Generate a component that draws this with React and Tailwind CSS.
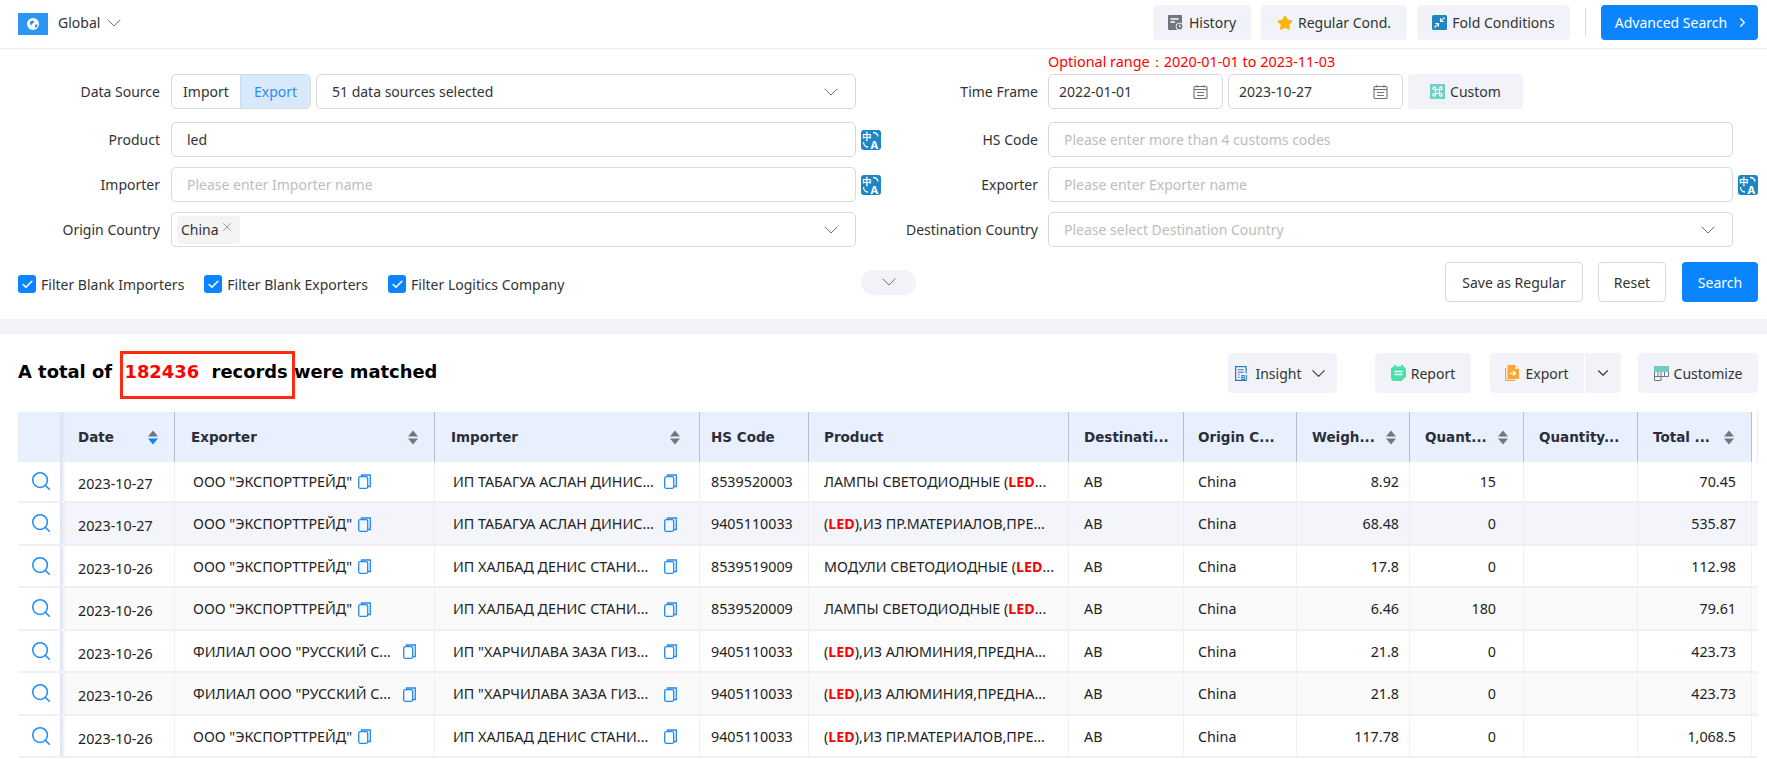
import { ChevronDown, ChevronRight, Search, X, Check, Star } from "lucide-react"

const font = "font-['Noto_Sans','Liberation_Sans',sans-serif]"

const GlobeIcon = () => (
  <svg width="14" height="14" viewBox="0 0 14 14">
    <circle cx="7" cy="7" r="6" fill="#fff" />
    <path d="M4 4.500l3-1 1.500 1.500-2 1.500-1 2-1.500-1.500zM9 8l2.500-1-.5 3-2 1z" fill="#2b96f6" />
  </svg>
)

const HistoryIcon = () => (
  <svg width="16" height="16" viewBox="0 0 16 16">
    <rect width="14" height="15" rx="1" fill="#71757f" />
    <path d="M2.500 4h8M2.500 7h4.500" stroke="#fff" strokeWidth="1.400" />
    <circle cx="11.500" cy="11.500" r="3.500" fill="#71757f" stroke="#f2f3f8" />
    <path d="M11.500 9.800v1.900h1.500" stroke="#fff" fill="none" strokeWidth="0.900" />
  </svg>
)

const FoldIcon = () => (
  <svg width="15" height="15" viewBox="0 0 15 15">
    <rect width="15" height="15" rx="1.500" fill="#1f86c4" />
    <path d="M12.500 2.500L8.800 6.200M8.500 3.300v3.200h3.200" stroke="#fff" strokeWidth="1.100" fill="none" />
    <path d="M2.500 12.500l3.700-3.700M3.300 8.500h3.200v3.200" stroke="#fff" strokeWidth="1.100" fill="none" />
  </svg>
)

const CalendarIcon = () => (
  <svg width="15" height="14" viewBox="0 0 15 14" fill="none" stroke="#70737a" strokeWidth="1.100">
    <rect x="1" y="1.500" width="13" height="12" rx="1" />
    <path d="M1 4.500h13M4 0v2.500M11 0v2.500M4 7.500h7M4 10.500h7" />
  </svg>
)

const CustomIcon = () => (
  <svg width="15" height="15" viewBox="0 0 15 15">
    <rect width="15" height="15" fill="#72cfc4" />
    <path d="M5.500 5.500h4v4h-4zM5.500 5.500H4.300a1.300 1.300 0 1 1 1.200-1.300zM9.500 5.500V4.200a1.300 1.300 0 1 1 1.300 1.300zM5.500 9.500v1.300a1.300 1.300 0 1 1-1.300-1.300zM9.500 9.500h1.300a1.300 1.300 0 1 1-1.300 1.300z" stroke="#fff" strokeWidth="1.200" fill="none" />
  </svg>
)

const TranslateIcon = () => (
  <svg width="20" height="20" viewBox="0 0 20 20" className="shrink-0">
    <rect width="20" height="20" rx="3" fill="#1f86c4" />
    <text x="1" y="10" fontSize="9.500" fontWeight="700" fill="#fff" fontFamily="'Noto Sans CJK SC',sans-serif">中</text>
    <text x="9.500" y="18.500" fontSize="11" fontWeight="700" fill="#fff" fontFamily="'Noto Sans',sans-serif">A</text>
    <path d="M12 2.500c2.500 0 4.500 1 5 4M2.500 12c0 3 2 5 4.500 5" stroke="#fff" strokeWidth="1.300" fill="none" />
  </svg>
)

const InsightIcon = () => (
  <svg width="15" height="15" viewBox="0 0 15 15" fill="none">
    <rect x="0.600" y="0.600" width="10.500" height="13.800" stroke="#2577b8" strokeWidth="1.200" />
    <path d="M2.800 3.800h6M2.800 6.300h6M2.800 8.800h1.700M2.800 11.300h1.700" stroke="#2577b8" strokeWidth="1.100" />
    <rect x="5.500" y="7.500" width="9.500" height="6.500" fill="#f2f3f8" />
    <text x="5.800" y="13.700" fontSize="6.500" fontWeight="700" fill="#2577b8" fontFamily="'Liberation Sans',sans-serif">BI</text>
  </svg>
)

const ReportIcon = () => (
  <svg width="15" height="16" viewBox="0 0 15 16">
    <path d="M3.500 1.500h8A3.500 3.500 0 0 1 15 5v6.500L10.500 16h-7A3.500 3.500 0 0 1 0 12.500V5a3.500 3.500 0 0 1 3.500-3.500z" fill="#47e2a8" />
    <path d="M4 0v3M11 0v3" stroke="#47e2a8" strokeWidth="2" />
    <path d="M3.500 6.500h8M3.500 9.500h8" stroke="#fff" strokeWidth="1.400" />
  </svg>
)

const ExportIcon = () => (
  <svg width="14" height="16" viewBox="0 0 14 16">
    <path d="M0 3h1.200v11.800H10V16H0z" fill="#f7a738" />
    <path d="M2.500 0h7.500l4 4v10H2.500z" fill="#f7a738" />
    <path d="M10 0l4 4h-4z" fill="#fde2b8" />
    <path d="M5 8.300h5.500M8 6l2.500 2.300L8 10.600" stroke="#fff" strokeWidth="1.200" fill="none" />
  </svg>
)

const CustomizeIcon = () => (
  <svg width="15" height="15" viewBox="0 0 15 15" fill="none">
    <rect width="15" height="6" fill="#6fcdc4" />
    <path d="M.500 6v8.500h6.500V6M.500 10.500h14V6M4 6v4.500M10.500 6v4.500" stroke="#71757f" />
  </svg>
)

const CopyIcon = () => (
  <svg width="13" height="15" viewBox="0 0 13 15" fill="none" stroke="#1f8bf5" strokeWidth="1.300" className="shrink-0">
    <path d="M3.500 2.500V1h8.800v11.500H10" />
    <rect x="0.700" y="2.700" width="9" height="11.600" rx="1.500" />
  </svg>
)

const SortIcon = ({ active }) => (
  <svg width="10" height="15" viewBox="0 0 10 15" className="shrink-0">
    <path d="M5 .500l5 6h-10z" fill="#73767d" />
    <path d="M5 14.500L10 8.500h-10z" fill={active ? "#0a84ff" : "#73767d"} />
  </svg>
)

const GrayButton = ({ children, className }) => (
  <div className={`flex items-center justify-center gap-[5px] rounded-[4px] bg-[#f2f3f8] text-[14px] text-[#333] ${className}`}>
    {children}
  </div>
)

const Field = ({ children, placeholder, chevron }) => (
  <div className="flex h-[35px] w-[685px] shrink-0 items-center rounded-[5px] border border-[#d9d9d9] pl-[15px] pr-[12px] text-[14px] text-[#333]">
    <div className="flex-1">{children || <span className="text-[#bdbdbd]">{placeholder}</span>}</div>
    {chevron && <ChevronDown size={24} strokeWidth={1} color="#70737a" />}
  </div>
)

const Label = ({ children, className }) => (
  <div className={`shrink-0 text-right text-[14px] text-[#333] ${className}`}>{children}</div>
)

const FormRow = ({ left, leftExtra, right, rightLabel, leftLabel, rightExtra, className }) => (
  <div className={`flex h-[35px] items-center ${className || ""}`}>
    <Label className="w-[160px]">{leftLabel}</Label>
    <div className="ml-[11px] flex w-[685px] shrink-0">{left}</div>
    <div className="ml-[5px] w-[20px] shrink-0">{leftExtra}</div>
    <Label className="w-[157px]">{rightLabel}</Label>
    <div className="ml-[10px] flex w-[685px] shrink-0">{right}</div>
    <div className="ml-[5px] w-[20px] shrink-0">{rightExtra}</div>
  </div>
)

const DateField = ({ value }) => (
  <div className="flex h-[35px] w-[175px] items-center justify-between rounded-[5px] border border-[#d9d9d9] pl-[10px] pr-[14px] text-[14px] text-[#333]">
    {value}
    <CalendarIcon />
  </div>
)

const FilterCheck = ({ label, className }) => (
  <div className={`mt-[4px] flex items-center gap-[5px] text-[14px] text-[#333] ${className || ""}`}>
    <span className="flex size-[18px] items-center justify-center rounded-[3px] bg-[#0a84ff]">
      <Check size={13} strokeWidth={3} color="#fff" />
    </span>
    {label}
  </div>
)

const columns = [
  { name: "Date", w: "w-[115px]", head: "pl-[18px] pr-[16px]", sort: true, active: true },
  { name: "Exporter", w: "w-[260px]", head: "pl-[16px] pr-[16px]", sort: true },
  { name: "Importer", w: "w-[265px]", head: "pl-[16px] pr-[19px]", sort: true },
  { name: "HS Code", w: "w-[109px]", head: "pl-[11px]" },
  { name: "Product", w: "w-[260px]", head: "pl-[15px]" },
  { name: "Destinati...", w: "w-[115px]", head: "pl-[15px]" },
  { name: "Origin C...", w: "w-[113px]", head: "pl-[14px]" },
  { name: "Weigh...", w: "w-[113px]", head: "pl-[15px] pr-[13px]", sort: true },
  { name: "Quant...", w: "w-[114px]", head: "pl-[15px] pr-[15px]", sort: true },
  { name: "Quantity...", w: "w-[114px]", head: "pl-[15px]" },
  { name: "Total ...", w: "w-[114px]", head: "pl-[15px] pr-[17px]", sort: true },
]

const EXP = 'ООО "ЭКСПОРТТРЕЙД"'
const FIL = 'ФИЛИАЛ ООО "РУССКИЙ С...'
const TAB = "ИП ТАБАГУА АСЛАН ДИНИС..."
const HAL = "ИП ХАЛБАД ДЕНИС СТАНИ..."
const HAR = 'ИП "ХАРЧИЛАВА ЗАЗА ГИЗ...'

const LED = () => <b className="font-bold text-[#f00]">LED</b>

const rows = [
  { bg: "bg-white", date: "2023-10-27", exp: EXP, imp: TAB, hs: "8539520003", product: <>ЛАМПЫ СВЕТОДИОДНЫЕ (<LED />...</>, weight: "8.92", qty: "15", total: "70.45" },
  { bg: "bg-[#f4f5fa]", date: "2023-10-27", exp: EXP, imp: TAB, hs: "9405110033", product: <>(<LED />),ИЗ ПР.МАТЕРИАЛОВ,ПРЕ...</>, weight: "68.48", qty: "0", total: "535.87" },
  { bg: "bg-white", date: "2023-10-26", exp: EXP, imp: HAL, hs: "8539519009", product: <>МОДУЛИ СВЕТОДИОДНЫЕ (<LED />...</>, weight: "17.8", qty: "0", total: "112.98" },
  { bg: "bg-[#fafafa]", date: "2023-10-26", exp: EXP, imp: HAL, hs: "8539520009", product: <>ЛАМПЫ СВЕТОДИОДНЫЕ (<LED />...</>, weight: "6.46", qty: "180", total: "79.61" },
  { bg: "bg-white", date: "2023-10-26", exp: FIL, imp: HAR, hs: "9405110033", product: <>(<LED />),ИЗ АЛЮМИНИЯ,ПРЕДНА...</>, weight: "21.8", qty: "0", total: "423.73" },
  { bg: "bg-[#fafafa]", date: "2023-10-26", exp: FIL, imp: HAR, hs: "9405110033", product: <>(<LED />),ИЗ АЛЮМИНИЯ,ПРЕДНА...</>, weight: "21.8", qty: "0", total: "423.73" },
  { bg: "bg-white", date: "2023-10-26", exp: EXP, imp: HAL, hs: "9405110033", product: <>(<LED />),ИЗ ПР.МАТЕРИАЛОВ,ПРЕ...</>, weight: "117.78", qty: "0", total: "1,068.5" },
]

const Cell = ({ className, children }) => (
  <div className={`flex h-full shrink-0 items-center border-r border-[#eff0f4] pt-[1.500px] whitespace-nowrap ${className}`}>
    {children}
  </div>
)

const FixedShadow = () => (
  <div className="absolute top-0 left-full h-full w-[6px] bg-gradient-to-r from-[#dde1ec] to-transparent" />
)

export default function App() {
  return (
    <div className={`h-[759px] w-[1767px] overflow-hidden bg-white ${font}`}>
      {/* top bar */}
      <div className="flex h-[49px] items-center border-b border-[#ececec] pb-[3px] pl-[18px] pr-[9px]">
        <div className="mt-[3px] flex h-[22px] w-[30px] items-center justify-center bg-[#2b96f6]"><GlobeIcon /></div>
        <span className="ml-[10px] text-[14px] text-[#333]">Global</span>
        <ChevronDown size={24} strokeWidth={1} color="#70737a" className="ml-[2px]" />
        <div className="ml-auto flex items-center">
          <GrayButton className="h-[35px] w-[98px]"><HistoryIcon />History</GrayButton>
          <GrayButton className="ml-[10px] h-[35px] w-[146px]"><Star size={16} fill="#fbb40a" color="#fbb40a" />Regular Cond.</GrayButton>
          <GrayButton className="ml-[10px] h-[35px] w-[153px]"><FoldIcon />Fold Conditions</GrayButton>
          <div className="ml-[15px] h-[29px] w-px bg-[#dcdcdc]" />
          <div className="ml-[15px] flex h-[35px] w-[157px] items-center justify-center gap-[8px] rounded-[4px] bg-[#0a84ff] pl-[6px] text-[14px] text-white">
            Advanced Search <ChevronRight size={15} color="#fff" />
          </div>
        </div>
      </div>

      {/* filters */}
      <div className="h-[270px]">
        <div className="flex h-[25px] items-center pl-[1048px] text-[14.400px] text-[#f00]">Optional range：2020-01-01 to 2023-11-03</div>
        <FormRow
          leftLabel="Data Source"
          left={
            <div className="flex w-full gap-[5px]">
              <div className="flex h-[35px] w-[140px] shrink-0 overflow-hidden rounded-[5px] border border-[#d9d9d9] text-[14px]">
                <span className="flex flex-1 items-center justify-center text-[#333]">Import</span>
                <span className="flex w-[70px] items-center justify-center border-l border-[#c5dcf5] bg-[#d8e9fc] text-[#2f8cf0]">Export</span>
              </div>
              <div className="flex h-[35px] flex-1 items-center rounded-[5px] border border-[#d9d9d9] pl-[15px] pr-[12px] text-[14px] text-[#333]">
                <span className="flex-1">51 data sources selected</span>
                <ChevronDown size={24} strokeWidth={1} color="#70737a" />
              </div>
            </div>
          }
          rightLabel="Time Frame"
          right={
            <div className="flex gap-[5px]">
              <DateField value="2022-01-01" />
              <DateField value="2023-10-27" />
              <GrayButton className="h-[35px] w-[115px]"><CustomIcon />Custom</GrayButton>
            </div>
          }
        />
        <FormRow
          className="mt-[13px]"
          leftLabel="Product"
          left={<Field><span>led</span></Field>}
          leftExtra={<TranslateIcon />}
          rightLabel="HS Code"
          right={<Field placeholder="Please enter more than 4 customs codes" />}
        />
        <FormRow
          className="mt-[10px]"
          leftLabel="Importer"
          left={<Field placeholder="Please enter Importer name" />}
          leftExtra={<TranslateIcon />}
          rightLabel="Exporter"
          right={<Field placeholder="Please enter Exporter name" />}
          rightExtra={<TranslateIcon />}
        />
        <FormRow
          className="mt-[10px]"
          leftLabel="Origin Country"
          left={
            <div className="flex h-[35px] w-[685px] items-center rounded-[5px] border border-[#d9d9d9] pl-[5px] pr-[12px] text-[14px] text-[#333]">
              <div className="flex h-[28px] w-[63px] items-center gap-[1px] rounded-[4px] bg-[#f4f4f5] pl-[4px]">
                China
                <X size={14} strokeWidth={1.400} color="#8a8d93" className="mb-[5px]" />
              </div>
              <div className="flex-1" />
              <ChevronDown size={24} strokeWidth={1} color="#70737a" />
            </div>
          }
          rightLabel="Destination Country"
          right={<Field placeholder="Please select Destination Country" chevron />}
        />
        <div className="mt-[15px] flex h-[40px] items-center pl-[18px] pr-[9px]">
          <FilterCheck label="Filter Blank Importers" />
          <FilterCheck label="Filter Blank Exporters" className="ml-[20px]" />
          <FilterCheck label="Filter Logitics Company" className="ml-[20px]" />
          <div className="ml-[297px] flex h-[25px] w-[55px] items-center justify-center rounded-full bg-[#f2f3f8]">
            <ChevronDown size={24} strokeWidth={1} color="#70737a" />
          </div>
          <div className="ml-auto flex h-[40px] w-[138px] items-center justify-center rounded-[4px] border border-[#d9d9d9] text-[14px] text-[#333]">Save as Regular</div>
          <div className="ml-[15px] flex h-[40px] w-[68px] items-center justify-center rounded-[4px] border border-[#d9d9d9] text-[14px] text-[#333]">Reset</div>
          <div className="ml-[16px] flex h-[40px] w-[76px] items-center justify-center rounded-[4px] bg-[#0a84ff] text-[14px] text-white">Search</div>
        </div>
      </div>

      <div className="h-[15px] bg-[#f1f3f8]" />

      {/* result header */}
      <div className="flex h-[78px] items-center pl-[18px] pr-[9px]">
        <div className="relative -mt-[1px] font-['DejaVu_Sans',sans-serif] text-[17.900px] font-bold whitespace-pre text-black">
          A total of  <span className="text-[#f00]">182436</span>  records were matched
          <div className="absolute -top-[8px] left-[102px] h-[48px] w-[175px] border-[3px] border-[#ff2a0f]" />
        </div>
        <div className="ml-auto flex items-center">
          <GrayButton className="h-[40px] w-[109px]"><InsightIcon />Insight<ChevronDown size={23} strokeWidth={1.100} color="#333" /></GrayButton>
          <GrayButton className="ml-[38px] h-[40px] w-[96px]"><ReportIcon />Report</GrayButton>
          <div className="ml-[19px] flex h-[40px] w-[131px] overflow-hidden rounded-[4px] bg-[#f2f3f8] text-[14px] text-[#333]">
            <div className="flex w-[95px] items-center justify-center gap-[6px] border-r border-white"><ExportIcon />Export</div>
            <div className="flex flex-1 items-center justify-center"><ChevronDown size={18} strokeWidth={1.500} color="#333" /></div>
          </div>
          <GrayButton className="ml-[17px] h-[40px] w-[120px]"><CustomizeIcon />Customize</GrayButton>
        </div>
      </div>

      {/* table */}
      <div className="ml-[18px] w-[1740px]">
        <div className="relative z-10 flex h-[50px] bg-[#e9f0fd]">
          <div className="relative h-full w-[42px] shrink-0"><FixedShadow /></div>
          {columns.map((col) => (
            <div key={col.name} className={`flex h-full shrink-0 items-center justify-between border-r border-[#b9bdc9] font-['DejaVu_Sans',sans-serif] text-[13.500px] font-bold whitespace-nowrap text-[#2b2e3a] ${col.w} ${col.head}`}>
              {col.name}
              {col.sort && <SortIcon active={col.active} />}
            </div>
          ))}
          <div className="w-[6px] border-r border-[#ececec] bg-white" />
        </div>
        <div className="-mt-[1.500px]">
          {rows.map((row, i) => (
            <div key={i} className={`flex h-[42.500px] border-b-2 border-[#eff0f4] text-[14.300px] text-[#222] ${row.bg}`}>
              <div className="relative flex h-full w-[42px] shrink-0 items-center justify-center bg-white pl-[3px]">
                <Search size={22} strokeWidth={1.700} color="#1f8bf5" />
                <FixedShadow />
              </div>
              <Cell className="w-[115px] pl-[18px]"><span className="pt-[4px]">{row.date}</span></Cell>
              <Cell className="w-[260px] gap-[6px] pl-[18px]">
                {row.exp}
                <span className={row.exp === FIL ? "ml-[6px]" : ""}><CopyIcon /></span>
              </Cell>
              <Cell className="w-[265px] justify-between pl-[18px] pr-[22px]">
                {row.imp}
                <CopyIcon />
              </Cell>
              <Cell className="w-[109px] pl-[11px]">{row.hs}</Cell>
              <Cell className="w-[260px] pl-[15px]"><span>{row.product}</span></Cell>
              <Cell className="w-[115px] pl-[15px]">AB</Cell>
              <Cell className="w-[113px] pl-[14px]">China</Cell>
              <Cell className="w-[113px] justify-end pr-[10px]">{row.weight}</Cell>
              <Cell className="w-[114px] justify-end pr-[27px]">{row.qty}</Cell>
              <Cell className="w-[114px]" />
              <Cell className="w-[114px] justify-end pr-[15px]">{row.total}</Cell>
            </div>
          ))}
        </div>
      </div>
    </div>
  )
}
